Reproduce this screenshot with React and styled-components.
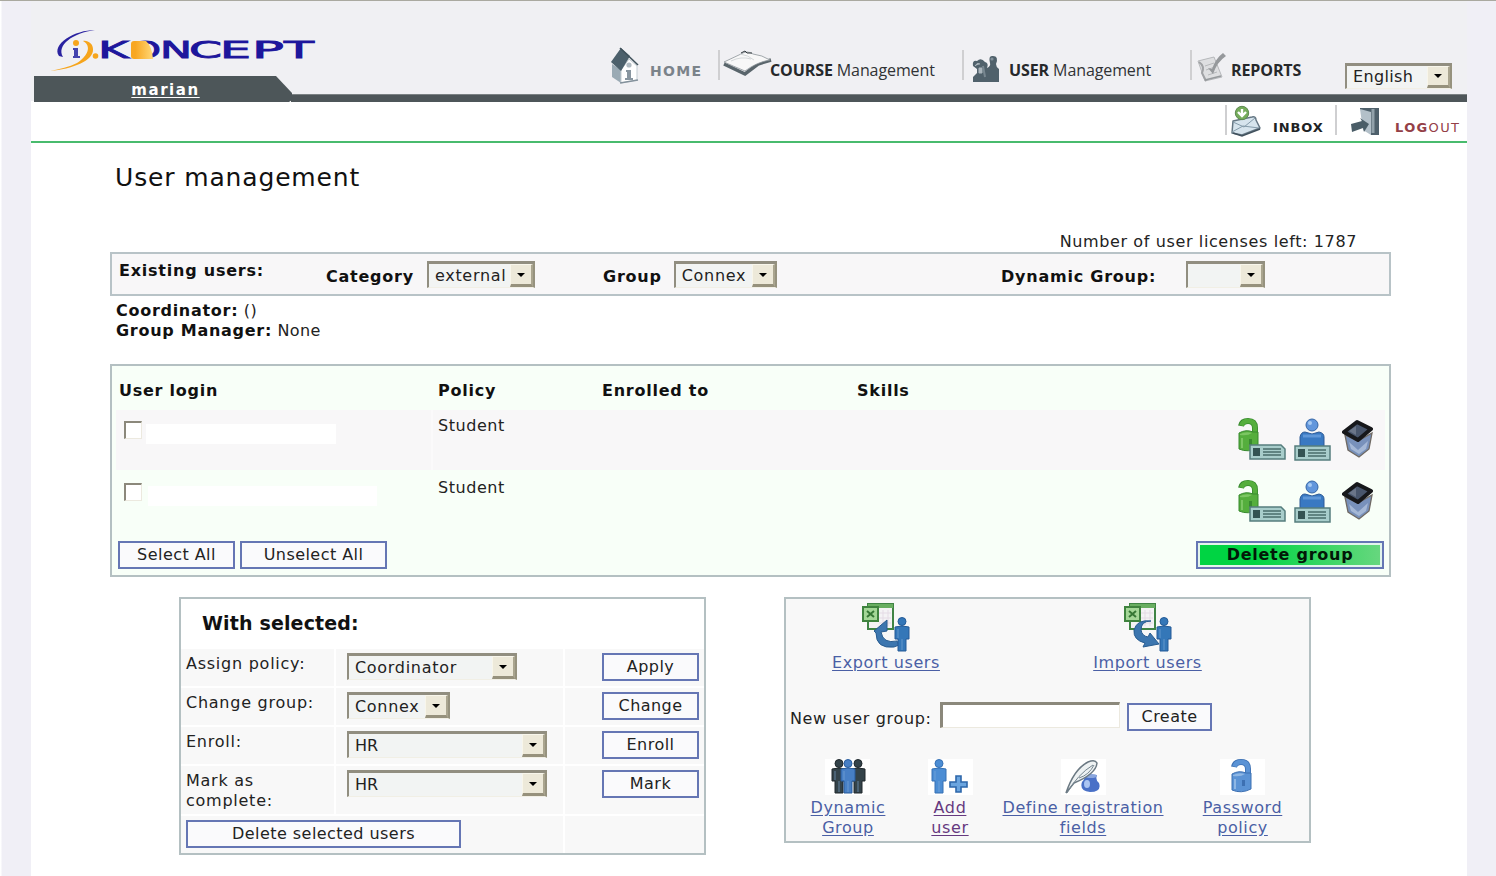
import React from "react";
import styled, { createGlobalStyle } from "styled-components";

const Global = createGlobalStyle`
  *{box-sizing:border-box}
  html,body,#root{height:100%}
  body{margin:0;overflow:hidden;background:#f0eff6;font:16px/20px "DejaVu Sans",Verdana,sans-serif;color:#222}
`;
const Page = styled.div`height:876px;border-top:1px solid #aaa9a0;padding:0 29px 0 31px;background:linear-gradient(90deg,#fff 1px,#f0eff6 2px)`;
const Sheet = styled.div`width:1436px;height:875px;background:#fff;display:flex;flex-direction:column`;
const Header = styled.header`height:101px;display:flex;background:linear-gradient(#f0f0f3 100px,#fff 100px)`;
const Brand = styled.div`width:261px;height:101px;padding-left:3px`;
const LogoArea = styled.div`height:75px;padding:24px 0 0 16px`;
const Tab = styled.div`
  height:26px;width:258px;padding:2px 0 0 5px;background:#4d5659;display:flex;align-items:center;justify-content:center;
  clip-path:polygon(0 0,242px 0,258px 17px,258px 24px,255px 100%,0 100%);
`;
const TabLink = styled.a`color:#fff;font-weight:bold;font-size:15px;letter-spacing:1.55px;text-decoration:underline;text-underline-offset:2px`;
const HeaderRight = styled.div`flex:1;height:101px`;
const Nav = styled.nav`height:93px;display:flex;padding-left:317px`;
const Bar = styled.div`height:8px;background:#4e5659;border-top:1px solid #7b8183;margin-left:-1px`;
const NavItem = styled.a`
  display:flex;align-items:flex-start;width:${p => p.$w}px;flex:none;padding-left:${p => p.$pl || 0}px;
  svg{flex:none;margin-top:${p => p.$iconTop}px}
`;
const Divider = styled.i`width:2px;height:${p => p.$h || 30}px;margin-top:${p => p.$top}px;background:#cfcfd1;flex:none`;
const NavText = styled.span`
  margin:${p => p.$top || 59}px 0 0 ${p => p.$ml || 0}px;white-space:nowrap;color:#303335;
  font-family:"Open Sans","Noto Sans",sans-serif;font-size:16px;letter-spacing:-.1px;
  b{color:#26282a}
`;
const WideText = styled.span`
  margin:${p => p.$top}px 0 0 ${p => p.$ml}px;font-size:${p => p.$size || 13}px;letter-spacing:${p => p.$ls}px;color:${p => p.$color};white-space:nowrap;
`;
const SubNav = styled.div`height:41px;border-bottom:2px solid #48bb6d;display:flex;padding-left:1194px`;

const Box = styled.span`
  display:inline-flex;width:${p => p.$w}px;height:${p => p.$h || 27}px;flex:none;
  margin:${p => p.$m || 0};padding-left:6px;background:#f2f4f3;
  border:solid;border-width:3px 2px 1px 2px;border-color:#918e80 #96927e #f1efe5 #918e80;
  align-items:center;justify-content:space-between;white-space:nowrap;letter-spacing:${p => p.$ls ?? .7}px;
`;
const Arrow = styled.i`
  width:23px;height:100%;background:#ede9d9;border:solid;border-width:1px 2px 3px 1px;border-color:#f8f6eb #aaa58f #96917c #f8f6eb;
  display:flex;align-items:center;justify-content:center;flex:none;
  &::after{content:"";border:4px solid transparent;border-top-color:#000;border-bottom:0}
`;
const Select = ({ children, ...p }) => <Box {...p}><span>{children}</span><Arrow /></Box>;

const Main = styled.main`padding-left:79px;width:1360px;display:flex;flex-direction:column`;
const Title = styled.h1`margin:20px 0 0 5px;font-size:25px;line-height:30px;font-weight:normal;color:#111;letter-spacing:.85px`;
const License = styled.div`margin:39px 34px 0 0;height:20px;text-align:right;letter-spacing:.62px`;
const FilterBox = styled.section`height:44px;border:2px solid #b8c3c7;background:#f8f7f8;display:grid;grid-template-columns:207px 277px 398px auto`;
const FilterCell = styled.div`display:flex;align-items:flex-start;padding-left:7px;b{margin-top:${p => p.$top}px;color:#111;letter-spacing:.77px;white-space:nowrap}`;
const Meta = styled.div`margin:5px 0 0 6px;height:63px;letter-spacing:.4px;b{color:#111;letter-spacing:.72px}`;
const Users = styled.section`height:213px;border:2px solid #b4c0c2;background:#f8fff8;display:flex;flex-direction:column`;
const cols = "319px 164px 255px 250px auto";
const HeadRow = styled.div`display:grid;grid-template-columns:${cols};height:44px;padding:15px 0 0 7px;font-weight:bold;color:#111;letter-spacing:.75px`;
const UserRow = styled.div`
  display:grid;grid-template-columns:${cols};height:60px;margin:0 4px 2px 4px;padding:6px 0 0 3px;letter-spacing:.55px;
  background:${p => p.$alt ? "#f8fff8" : "linear-gradient(90deg,#f8f7f8 315px,#fbfafb 315px,#fbfafb 317px,#f8f7f8 317px)"};
`;
const LoginCell = styled.div`display:flex;align-items:flex-start;padding-left:5px`;
const Check = styled.i`width:18px;height:18px;margin-top:5px;background:#fff;border:solid;border-width:2px 1px 1px 2px;border-color:#8b887b #ece9df #ece9df #8b887b`;
const Redacted = styled.i`height:20px;width:${p => p.$w}px;margin:8px 0 0 ${p => p.$ml}px;background:#fff`;
const Actions = styled.div`display:flex;padding:2px 0 0 131px;svg{flex:none}`;
const FootRow = styled.div`display:flex;padding:7px 5px 0 6px`;
const Button = styled.button`
  width:${p => p.$w}px;height:28px;flex:none;padding:0 0 1px;border:2px solid #6576b4;background:#fafafc;margin:${p => p.$m || 0};
  font:16px/20px "DejaVu Sans",Verdana,sans-serif;color:#222;letter-spacing:.45px;white-space:nowrap;
`;
const DangerButton = styled(Button)`
  margin-left:auto;font-weight:bold;letter-spacing:.75px;color:#021808;background:linear-gradient(90deg,#00d443 30%,#68d77f);box-shadow:inset 0 0 0 2px #e2f4ec;
`;
const Panels = styled.div`display:flex;margin:20px 0 0 69px;align-items:flex-start`;
const SelectedPanel = styled.section`width:527px;height:258px;border:2px solid #b4c0c2;background:#fff`;
const PanelTitle = styled.h2`margin:0;height:50px;padding:14px 0 0 21px;font-size:19px;line-height:20px;color:#111;letter-spacing:.15px`;
const FormRow = styled.div`
  display:grid;grid-template-columns:${p => p.$wide ? "382px 1fr" : "153px 227px 1fr"};gap:2px;height:${p => p.$h || 37}px;margin-bottom:2px;
  >*{background:#f8f8f8}
`;
const FormLabel = styled.div`padding:5px 0 0 5px;letter-spacing:.75px`;
const FormCell = styled.div`padding:4px 0 0 ${p => p.$pl}px;display:flex;align-items:flex-start`;
const ToolsPanel = styled.section`width:527px;height:246px;margin-left:78px;border:2px solid #b4c0c2;background:#f8f8f8;display:flex;flex-direction:column`;
const ToolRow = styled.div`display:grid;grid-template-columns:${p => p.$cols};justify-items:center;margin-top:${p => p.$mt}px`;
const Tool = styled.a`
  display:flex;flex-direction:column;align-items:center;text-align:center;width:max-content;
  color:${p => p.$visited ? "#66397f" : "#4a5fa5"};text-decoration:underline;text-underline-offset:2px;letter-spacing:.6px;
`;
const White = styled.span`background:#fff;width:45px;height:36px;display:flex;justify-content:center;margin-bottom:3px`;
const CreateRow = styled.div`display:flex;height:28px;margin:29px 0 0 4px;letter-spacing:.65px;label{margin-top:7px;width:150px;white-space:nowrap}`;
const Input = styled.input`width:180px;height:26px;background:#fff;border:solid;border-width:3px 1px 1px 3px;border-color:#8b887b #ece9df #ece9df #8b887b`;

const letters = [["K", 48, 31], ["O", 80, 31], ["N", 110, 32], ["C", 139, 33], ["E", 170, 31], ["P", 202, 32], ["T", 234, 30]];
const Logo = () => (
  <svg width="270" height="50" viewBox="0 0 270 50">
    <path d="M45 5C25 5 1 19 9 31L13 32C6 20 23 8 45 5Z" fill="#2a22a0" />
    <path d="M0 46C22 44 44 36 43 24C43 19 38 15 33 16C42 21 38 31 27 38C19 42 10 44 0 46Z" fill="#f6a51c" />
    <circle cx="26" cy="18" r="3" fill="#f6a51c" />
    <path d="M23 23H28V31H30V33H23V31H24V25H23Z" fill="#4444ae" />
    <circle cx="45.5" cy="31" r="2.8" fill="#f6a51c" />
    <g fill="#1d169c" stroke="#1d169c" strokeWidth=".8" fontFamily="DejaVu Sans" fontSize="23">
      {letters.map(([c, x, w]) => <text key={c} x={x} y="33" textLength={w} lengthAdjust="spacingAndGlyphs">{c}</text>)}
    </g>
    <defs><linearGradient id="sun"><stop offset=".2" stopColor="#f8a722" /><stop offset="1" stopColor="#ffd878" /></linearGradient></defs>
    <path d="M84 16H96Q102 21 103 34H84Q81 34 81 31V19Q81 16 84 16Z" fill="url(#sun)" />
  </svg>
);
const HomeIcon = () => (
  <svg width="32" height="38" viewBox="0 0 32 38">
    <path d="M3 17V30L12 36V23Z" fill="#9aaab4" /><path d="M12 23L20 12L28 19V33L12 36Z" fill="#fff" stroke="#c3ccd2" />
    <path d="M12 1L21 9L12 24L2 15Z" fill="#4c606b" /><path d="M11 1L29 18" stroke="#40525b" strokeWidth="1.6" />
    <circle cx="20" cy="18" r="2.6" fill="#b1bbc2" /><path d="M17 23H22V31H24V33H16V31H18V25H17Z" fill="#8996a0" />
    <path d="M11 36L29 33" stroke="#84929c" strokeWidth="1.5" />
  </svg>
);
const BookIcon = () => (
  <svg width="50" height="27" viewBox="0 0 50 27">
    <path d="M2 14L23 24L36 14L49 10" fill="none" stroke="#59656b" strokeWidth="3.5" />
    <path d="M2 12L19 4Q25 0 31 4Q40 5 48 10Q35 12 23 21Q11 16 2 12Z" fill="#f8f8f8" stroke="#8b9398" strokeWidth=".8" />
    <path d="M9 11Q19 6 29 9M18 4Q26 5 32 10" fill="none" stroke="#d4d8da" />
    <path d="M19 3L23 1L25 3L30 3" stroke="#30383d" fill="none" />
  </svg>
);
const PeopleIcon = () => (
  <svg width="28" height="28" viewBox="0 0 28 28">
    <path d="M1 11Q0 5 5 6Q9 2 13 7Q17 8 15 13Q19 11 18 8Q16 0 21 1Q27 1 24 9Q24 12 27 14V27H1V22L5 18V14Z" fill="#50616b" />
    <path d="M3 11Q5 7 8 9M7 13H10V18H7Z" fill="#aab5bc" stroke="#aab5bc" /><path d="M11 11L13 22" stroke="#788790" strokeWidth="2" />
    <circle cx="20" cy="4" r="1.6" fill="#81909a" />
  </svg>
);
const ReportIcon = () => (
  <svg width="31" height="31" viewBox="0 0 31 31">
    <path d="M1 9L17 5L25 25L8 29Z" fill="#dedfe1" stroke="#b6b8bb" /><path d="M2 10Q8 14 5 21L9 29" fill="none" stroke="#a0a2a5" strokeWidth="2" />
    <path d="M8 14L17 11M9 18L18 15M11 23L20 20" stroke="#b7b9bb" />
    <path d="M11 16L16 22Q20 10 29 4L26 1Q19 6 15 17Z" fill="#96999c" /><path d="M8 28L24 24" stroke="#95999c" strokeWidth="1.5" />
  </svg>
);
const InboxIcon = () => (
  <svg width="32" height="32" viewBox="0 0 32 32">
    <path d="M3 16L22 12Q26 11 26 15L30 23L12 30L2 28Z" fill="#d6e4ed" stroke="#647683" strokeWidth="1.5" strokeLinejoin="round" />
    <path d="M3 17L14 22L25 13M2 27L13 21L29 23" fill="none" stroke="#849baa" />
    <path d="M3 28L12 31L30 24" fill="none" stroke="#41515d" strokeWidth="1.6" />
    <circle cx="12" cy="8" r="6.7" fill="#75ac5b" stroke="#5d8951" /><path d="M12 4V10M8 7L12 11L16 7" fill="none" stroke="#fff" strokeWidth="2.4" />
  </svg>
);
const ExitIcon = () => (
  <svg width="31" height="29" viewBox="0 0 31 29">
    <path d="M10 1H29V28H21L20 6L10 3Z" fill="#4e606b" /><path d="M10 2L21 5V28L13 23Z" fill="#b3c0c9" /><path d="M23 2V26" stroke="#91a1aa" strokeWidth="3" />
    <path d="M1 17L12 14L10 11L19 17L14 25L13 21L2 25Z" fill="#4a5d67" />
  </svg>
);
const CardArt = ({ x, y, w, clipped }) => (
  <g>
    <path d={`M${x} ${y}H${x + w - (clipped ? 4 : 0)}L${x + w} ${y + (clipped ? 4 : 0)}V${y + 14}H${x}Z`} fill="#a8cdcb" stroke="#557e7d" strokeWidth="1.5" />
    <path d={`M${x + 3} ${y + 3}h7v8h-7z`} fill="#345353" />
    <path d={`M${x + 13} ${y + 4}h${w - 17}M${x + 13} ${y + 7}h${w - 17}M${x + 13} ${y + 10}h${w - 17}`} stroke="#486c6b" strokeWidth="1.3" />
  </g>
);
const LockArt = ({ light, dark, top }) => (
  <g>
    <path d="M3 8Q4 3 10 3Q17 3 17 10V18" fill="none" stroke={dark} strokeWidth="6" /><path d="M3.4 7.5Q5 3 10 3Q17 3 17 10V18" fill="none" stroke={light} strokeWidth="4.4" />
    <path d="M1 15Q8 11 15 14H20V30Q10 35 1 31Z" fill={light} stroke={dark} /><path d="M2 16Q8 13 14 15Q10 18 2 17Z" fill={top} />
    <path d="M4 20V30" stroke={top} strokeWidth="2" /><path d="M12.5 21V27" stroke={dark} strokeWidth="3" />
  </g>
);
const ProfileLock = () => (
  <svg width="56" height="44" viewBox="0 0 56 44"><LockArt light="#55ae3d" dark="#388a2f" top="#7cc663" /><CardArt x={12} y={27} w={35} clipped /></svg>
);
const ProfileIcon = () => (
  <svg width="48" height="44" viewBox="0 0 48 44">
    <circle cx="18" cy="7" r="6" fill="#6296dc" stroke="#3566a6" /><circle cx="16" cy="5" r="2" fill="#a7caf3" />
    <path d="M6 29V19Q7 14 11 14L18 16L25 14Q30 15 30 19V29Z" fill="#3979c2" stroke="#2e5b97" /><path d="M9 18H27" stroke="#5f97d8" strokeWidth="3" />
    <CardArt x={1} y={28} w={35} />
  </svg>
);
const BinIcon = () => (
  <svg width="32" height="44" viewBox="0 0 32 44">
    <path d="M3 17L6 32L17 39L27 31L30 15L16 23Z" fill="#7891bb" stroke="#6f6963" strokeWidth="1.3" /><path d="M7 24L16 32L26 23L24 31L17 36L9 31Z" fill="#a5b8d6" />
    <path d="M15 4L29 11L16 22L2 14Z" fill="#49566c" stroke="#17181b" strokeWidth="4" strokeLinejoin="round" /><path d="M14 8V17L7 13Z" fill="#6b7689" />
  </svg>
);
const PersonArt = ({ x = 0, color = "#3477b8", edge = "#245b97" }) => (
  <g transform={`translate(${x} 0)`}>
    <circle cx="8" cy="4.5" r="4" fill={color} stroke={edge} /><path d="M1 10Q8 8 15 10V22H12V34H4V22H1Z" fill={color} stroke={edge} /><path d="M4 12V21M8 22V33" stroke="#83aeda" strokeOpacity=".6" />
  </g>
);
const SheetUser = ({ incoming }) => (
  <svg width="50" height="50" viewBox="0 0 50 50">
    <path d="M7 1H32V26H7Z" fill="#f4f3f5" stroke="#408445" strokeWidth="2" /><path d="M7 3H32" stroke="#69ae61" strokeWidth="4" />
    <path d="M18 10H30M18 15H30M18 20H30M22 7V23M27 7V23" stroke="#e4dbe5" />
    <path d="M2 4H17V18H2Z" fill="#a4d797" stroke="#3f833e" strokeWidth="2" /><path d="M6 8L13 14M13 8L6 14" stroke="#367735" strokeWidth="2" />
    {incoming
      ? <path d="M28 18Q18 18 18 27Q19 33 25 34L27 30L36 41L20 44L22 40Q10 37 11 27Q14 16 28 18Z" fill="#3c76af" stroke="#285c90" />
      : <path d="M36 38Q22 41 20 29L26 28L26 17L13 28L15 30Q15 46 33 44L38 42Z" fill="#3c76af" stroke="#285c90" />}
    <g transform="translate(33 14)"><PersonArt /></g>
  </svg>
);
const GroupIcon = () => <svg width="38" height="36" viewBox="0 0 38 36"><PersonArt x={2} color="#34434a" edge="#20292d" /><PersonArt x={21} color="#34434a" edge="#20292d" /><PersonArt x={11} color="#477fc5" edge="#285c9c" /></svg>;
const AddIcon = () => <svg width="38" height="36" viewBox="0 0 38 36"><PersonArt color="#4c8dd4" edge="#3671b4" /><path d="M25 17H30V23H36V28H30V33H25V28H19V23H25Z" fill="#6ba5df" stroke="#2e67aa" strokeWidth="1.6" /></svg>;
const QuillIcon = () => (
  <svg width="36" height="36" viewBox="0 0 36 36">
    <path d="M17 23Q20 20 20 15L32 16Q30 21 34 24Q37 33 25 33Q14 32 17 23Z" fill="#4a71c7" /><ellipse cx="26" cy="17" rx="6" ry="2" fill="#8aa6de" /><ellipse cx="22" cy="25" rx="3" ry="4" fill="#abc5f2" />
    <path d="M1 34Q9 10 23 3Q30 0 32 4Q31 15 9 24Z" fill="#eef2f3" stroke="#6b7983" strokeWidth="1.5" /><path d="M2 34Q13 15 28 6M14 19Q24 16 29 6" fill="none" stroke="#75858f" />
  </svg>
);

const UserEntry = ({ alt, w, ml }) => (
  <UserRow $alt={alt}>
    <LoginCell><Check /><Redacted $w={w} $ml={ml} /></LoginCell><span>Student</span><span /><span />
    <Actions><ProfileLock /><ProfileIcon /><BinIcon /></Actions>
  </UserRow>
);

export default function App() {
  return (
    <>
      <Global />
      <Page><Sheet>
        <Header>
          <Brand><LogoArea><Logo /></LogoArea><Tab><TabLink>marian</TabLink></Tab></Brand>
          <HeaderRight>
            <Nav>
              <NavItem $w={109} $iconTop={46}><HomeIcon /><WideText $top={60} $ml={9} $size={14} $ls={1.3} $color="#7b838a"><b>HOME</b></WideText></NavItem>
              <Divider $top={49} />
              <NavItem $w={242} $pl={2} $iconTop={49}><BookIcon /><NavText $ml={-2}><b>COURSE</b> Management</NavText></NavItem>
              <Divider $top={49} />
              <NavItem $w={226} $pl={8} $iconTop={54}><PeopleIcon /><NavText $ml={9}><b>USER</b> Management</NavText></NavItem>
              <Divider $top={49} />
              <NavItem $w={153} $pl={5} $iconTop={51}><ReportIcon /><NavText $ml={3}><b>REPORTS</b></NavText></NavItem>
              <Select $w={107} $m="62px 0 0 0" $h={26} $ls={.35}>English</Select>
            </Nav>
            <Bar />
          </HeaderRight>
        </Header>
        <SubNav>
          <Divider $top={3} />
          <NavItem $w={108} $pl={3} $iconTop={3}><InboxIcon /><WideText $top={16} $ml={11} $ls={.9} $color="#202224"><b>INBOX</b></WideText></NavItem>
          <Divider $top={3} />
          <NavItem $w={128} $pl={13} $iconTop={5}><ExitIcon /><WideText $top={16} $ml={14} $ls={1.35} $color="#944047"><b>LOG</b>OUT</WideText></NavItem>
        </SubNav>
        <Main>
          <Title>User management</Title>
          <License>Number of user licenses left: 1787</License>
          <FilterBox>
            <FilterCell $top={7}><b>Existing users:</b></FilterCell>
            <FilterCell $top={13}><b>Category</b><Select $w={108} $m="7px 0 0 13px">external</Select></FilterCell>
            <FilterCell $top={13}><b>Group</b><Select $w={103} $m="7px 0 0 12px">Connex</Select></FilterCell>
            <FilterCell $top={13}><b>Dynamic Group:</b><Select $w={79} $m="7px 0 0 30px" /></FilterCell>
          </FilterBox>
          <Meta><div><b>Coordinator:</b> ()</div><div><b>Group Manager:</b> None</div></Meta>
          <Users>
            <HeadRow><span>User login</span><span>Policy</span><span>Enrolled to</span><span>Skills</span></HeadRow>
            <UserEntry w={190} ml={4} />
            <UserEntry alt w={229} ml={6} />
            <FootRow><Button $w={117}>Select All</Button><Button $w={147} $m="0 0 0 5px">Unselect All</Button><DangerButton $w={188}>Delete group</DangerButton></FootRow>
          </Users>
          <Panels>
            <SelectedPanel>
              <PanelTitle>With selected:</PanelTitle>
              <FormRow><FormLabel>Assign policy:</FormLabel><FormCell $pl={11}><Select $w={170}>Coordinator</Select></FormCell><FormCell $pl={37}><Button $w={97}>Apply</Button></FormCell></FormRow>
              <FormRow><FormLabel>Change group:</FormLabel><FormCell $pl={11}><Select $w={103}>Connex</Select></FormCell><FormCell $pl={37}><Button $w={97}>Change</Button></FormCell></FormRow>
              <FormRow><FormLabel>Enroll:</FormLabel><FormCell $pl={11}><Select $w={200} $ls={0}>HR</Select></FormCell><FormCell $pl={37}><Button $w={97}>Enroll</Button></FormCell></FormRow>
              <FormRow $h={48}><FormLabel>Mark as<br />complete:</FormLabel><FormCell $pl={11}><Select $w={200} $ls={0}>HR</Select></FormCell><FormCell $pl={37}><Button $w={97}>Mark</Button></FormCell></FormRow>
              <FormRow $wide><FormCell $pl={5}><Button $w={275}>Delete selected users</Button></FormCell><span /></FormRow>
            </SelectedPanel>
            <ToolsPanel>
              <ToolRow $cols="200px 323px" $mt={4}><Tool><SheetUser />Export users</Tool><Tool><SheetUser incoming />Import users</Tool></ToolRow>
              <CreateRow><label>New user group:</label><Input /><Button $w={85} $m="1px 0 0 7px">Create</Button></CreateRow>
              <ToolRow $cols="124px 80px 186px 133px" $mt={29}>
                <Tool><White><GroupIcon /></White>Dynamic<br />Group</Tool>
                <Tool $visited><White><AddIcon /></White>Add<br />user</Tool>
                <Tool><White><QuillIcon /></White><span>Define registration<br />fields</span></Tool>
                <Tool><White><svg width="22" height="35" viewBox="0 0 22 35"><LockArt light="#5b93d5" dark="#3d70b2" top="#8fb7e4" /></svg></White>Password<br />policy</Tool>
              </ToolRow>
            </ToolsPanel>
          </Panels>
        </Main>
      </Sheet></Page>
    </>
  );
}
